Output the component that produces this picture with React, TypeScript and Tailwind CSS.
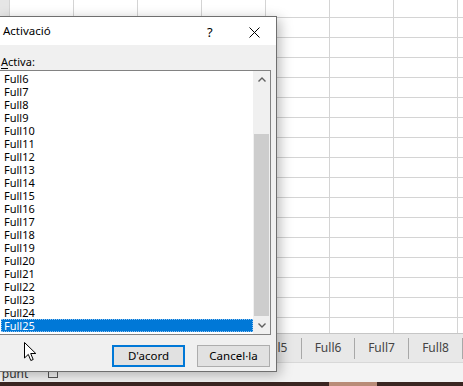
import React from "react";

const COLS = [10, 64, 64, 64, 64, 64, 64, 64, 64];
const ROWS = Array.from({ length: 18 });
const ITEMS = Array.from({ length: 20 }, (_, i) => `Full${i + 6}`);

function Grid() {
  return (
    <div className="h-[333px] overflow-hidden bg-white">
      <div className="mt-[-2px]">
        {ROWS.map((_, r) => (
          <div key={r} className="flex h-[20px] border-b border-[#d4d4d4]">
            {COLS.map((w, c) => (
              <div
                key={c}
                className={`shrink-0 border-r border-[#d4d4d4] ${c === 0 ? "w-[10px] bg-[#e6e6e6]" : "w-[64px]"}`}
              />
            ))}
          </div>
        ))}
      </div>
    </div>
  );
}

function Sep() {
  return <div className="w-px h-[21px] bg-[#a8a8a8] shrink-0" />;
}

function Tab({ label, w }: { label: string; w: string }) {
  return <div className={`${w} shrink-0 text-center text-[12px] text-[#444]`}>{label}</div>;
}

function Chevron({ up }: { up?: boolean }) {
  return (
    <svg width="8" height="5" viewBox="0 0 8 5" className={up ? "" : "rotate-180"}>
      <path d="M0.5 4.5 L4 1 L7.5 4.5" fill="none" stroke="#606060" strokeWidth="1.4" />
    </svg>
  );
}

export default function App() {
  return (
    <div className="relative w-[463px] h-[386px] overflow-hidden bg-white font-['Noto_Sans',sans-serif]">
      <div className="flex flex-col h-full">
        <Grid />
        <div className="h-[29px] bg-[#e8e8e8] border-t border-[#c6c6c6] flex items-center">
          <div className="w-[247px] shrink-0" />
          <Tab label="Full5" w="w-[54px]" />
          <Sep />
          <Tab label="Full6" w="w-[52px]" />
          <Sep />
          <Tab label="Full7" w="w-[53px]" />
          <Sep />
          <Tab label="Full8" w="w-[53px]" />
          <Sep />
        </div>
        <div className="h-[20px] bg-[#f3f3f3] border-t border-[#d8d8d8] flex items-center pt-[3px] text-[12px] text-[#333]">
          <span className="ml-[-9px]">A punt</span>
          <div className="ml-[20px] w-[10px] h-[7px] border border-[#555]" />
        </div>
        <div className="flex-1 bg-[#3b2622] flex">
          <div className="ml-[329px] w-[48px] bg-[#b98c78]" />
        </div>
      </div>

      <div className="absolute left-[-1px] top-[16px] w-[278px] h-[356px] border border-[#6f6f6f] bg-[#f0f0f0] flex flex-col shadow-[3px_3px_12px_rgba(0,0,0,0.28)]">
        <div className="h-[28px] bg-white flex items-center shrink-0 relative">
          <span className="pl-[3px] text-[11.5px] text-black">Activació</span>
          <span className="absolute left-[207px] top-[6px] text-[13px] text-black">?</span>
          <svg className="absolute left-[249px] top-[10px]" width="11" height="11" viewBox="0 0 11 11">
            <path d="M0.5 0.5 L10.5 10.5 M10.5 0.5 L0.5 10.5" stroke="#000" strokeWidth="1" />
          </svg>
        </div>
        <div className="pt-[10px] pl-[1px] text-[11px] leading-[14px] text-black">
          <span className="underline underline-offset-[2px]">A</span>ctiva:
        </div>
        <div className="mt-[1px] ml-[-1px] w-[272px] h-[265px] border border-[#828282] bg-white flex">
          <div className="w-[254px] pt-[1px] text-[11px] leading-[13px]">
            {ITEMS.map((it, i) =>
              i === ITEMS.length - 1 ? (
                <div key={it} className="h-[13px] ml-[1px] w-[252px] bg-[#0078d7] text-white pl-[3px] outline-1 outline-dotted outline-offset-[-1px] outline-[#8fc1ef]">
                  {it}
                </div>
              ) : (
                <div key={it} className="h-[13px] pl-[4px] text-black">
                  {it}
                </div>
              )
            )}
          </div>
          <div className="w-[17px] bg-[#f0f0f0] flex flex-col">
            <div className="h-[17px] flex items-center justify-center">
              <Chevron up />
            </div>
            <div className="h-[46px]" />
            <div className="h-[182px] mx-[1px] bg-[#cdcdcd]" />
            <div className="h-px" />
            <div className="flex-1 flex items-center justify-center">
              <Chevron />
            </div>
          </div>
        </div>
        <div className="flex mt-[10px] text-[11.5px] text-black">
          <div className="ml-[112px] w-[73px] h-[22px] border-2 border-[#0078d7] bg-[#e1e1e1] flex items-center justify-center">
            D'acord
          </div>
          <div className="ml-[12px] w-[73px] h-[22px] border border-[#adadad] bg-[#e1e1e1] flex items-center justify-center">
            Cancel·la
          </div>
        </div>
      </div>

      <svg className="absolute left-[24px] top-[342px]" width="13" height="20" viewBox="0 0 13 20">
        <path d="M0.5 0.5 L0.5 16 L4.3 12.4 L6.8 18.5 L9.2 17.5 L6.7 11.5 L11.8 11.5 Z" fill="#fff" stroke="#000" strokeWidth="1" strokeLinejoin="round" />
      </svg>
    </div>
  );
}
